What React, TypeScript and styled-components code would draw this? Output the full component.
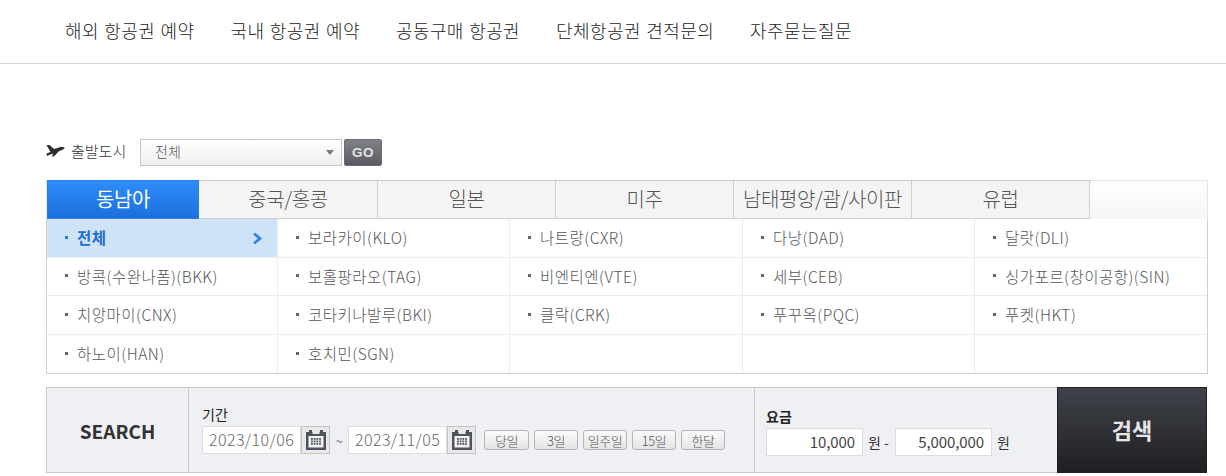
import styled, { createGlobalStyle } from 'styled-components';

const GlobalStyle = createGlobalStyle`
  html, body {
    margin: 0;
    padding: 0;
    background: #fff;
  }
  body {
    font-family: "Noto Sans CJK KR", "Noto Sans", sans-serif;
    color: #333;
    overflow: hidden;
  }
`;

const Nav = styled.nav`
  height: 63px;
  padding-left: 65px;
  display: flex;
  align-items: center;
  gap: 36px;
  border-bottom: 1px solid #d4d4d4;
`;

const NavItem = styled.a`
  font-size: 18px;
  letter-spacing: 0.4px;
  word-spacing: 1px;
  font-weight: 300;
  color: #222;
  line-height: 56px;
  height: 59px;
`;

const Page = styled.main`
  width: 1162px;
  margin-left: 46px;
  padding-top: 75px;
`;

const CityRow = styled.div`
  height: 27px;
  display: flex;
  align-items: center;
`;

const CityLabel = styled.span`
  width: 94px;
  display: flex;
  align-items: center;
  gap: 6px;
  font-size: 15px;
  font-weight: 300;
  color: #333;
  padding-bottom: 4px;
  box-sizing: border-box;
`;

const CitySelect = styled.div`
  border: 1px solid #c6c6c6;
  background: linear-gradient(#fff, #eeeeee);
  display: flex;
  align-items: center;
  justify-content: space-between;
  padding: 0 7px 3px 14px;
  box-sizing: content-box;
  width: 179px;
  height: 22px;
  font-size: 14px;
  font-weight: 300;
  color: #555;
`;

const Caret = styled.i`
  width: 0;
  height: 0;
  margin-top: 3px;
  border-left: 4.5px solid transparent;
  border-right: 4.5px solid transparent;
  border-top: 5px solid #777;
`;

const GoButton = styled.button`
  width: 38px;
  height: 27px;
  margin-left: 2px;
  padding: 0;
  border: 1px solid #6b6c72;
  border-radius: 2px;
  background: linear-gradient(#80828a, #595a61);
  color: #e4e4e4;
  font: 700 13.5px "Liberation Sans", sans-serif;
  letter-spacing: 0.5px;
`;

const TabBar = styled.div`
  margin-top: 14px;
  height: 39px;
  box-sizing: border-box;
  display: flex;
  border: 1px solid #e4e4e4;
  border-bottom: 0;
  background: linear-gradient(#fff, #f5f5f5);
`;

const Tab = styled.div<{ $active?: boolean; $width: number }>`
  width: ${(p) => p.$width}px;
  box-sizing: border-box;
  height: 39px;
  margin-top: -1px;
  padding-bottom: 2px;
  display: flex;
  align-items: center;
  justify-content: center;
  font-size: 20px;
  font-weight: ${(p) => (p.$active ? 400 : 300)};
  letter-spacing: -0.4px;
  white-space: nowrap;
  color: ${(p) => (p.$active ? '#fff' : '#555')};
  background: ${(p) => (p.$active ? 'linear-gradient(#2f8cfb, #1c70dc)' : '#f4f4f4')};
  border: 1px solid #cfcfcf;
  border-left-width: ${(p) => (p.$active ? '1px' : '0')};
  border-color: ${(p) => (p.$active ? '#2a82ef' : '#cfcfcf')};
`;

const CityGrid = styled.div`
  display: grid;
  grid-template-columns: 231px 232px 233px 232px 1fr;
  grid-auto-rows: 38.5px;
  border: 1px solid #cfcfcf;
  border-top: 0;
  height: 154px;
`;

const CityCell = styled.div<{ $active?: boolean }>`
  position: relative;
  box-sizing: border-box;
  display: flex;
  align-items: center;
  padding-left: 18px;
  padding-bottom: 1px;
  gap: 9px;
  border-right: 1px solid #ececec;
  border-bottom: 1px solid #ececec;
  font-size: 15.5px;
  letter-spacing: 0.5px;
  font-weight: ${(p) => (p.$active ? 700 : 300)};
  color: ${(p) => (p.$active ? '#1f6fd0' : '#555')};
  background: ${(p) => (p.$active ? '#cfe3f8' : '#fff')};

  &:nth-child(5n) {
    border-right: 0;
  }
  &:nth-last-child(-n + 5) {
    border-bottom: 0;
  }
`;

const Bullet = styled.i<{ $active?: boolean }>`
  width: 3px;
  height: 3px;
  background: ${(p) => (p.$active ? '#2a7fe0' : '#666')};
`;

const Chevron = styled.svg`
  position: absolute;
  right: 15px;
  top: 14px;
`;

const SearchPanel = styled.form`
  margin-top: 13px;
  width: 1161px;
  height: 86px;
  box-sizing: border-box;
  display: flex;
  background: #eff0f4;
  border: 1px solid #c9c9c9;
  border-right: 0;
`;

const SearchTitle = styled.div`
  width: 141px;
  flex: none;
  display: flex;
  align-items: center;
  justify-content: center;
  border-right: 1px solid #c9c9c9;
  font-size: 19px;
  font-weight: 700;
  color: #333;
`;

const PeriodCell = styled.div`
  width: 566px;
  flex: none;
  box-sizing: border-box;
  padding: 16px 0 0 13px;
  border-right: 1px solid #c9c9c9;
`;

const FeeCell = styled.div`
  width: 302px;
  flex: none;
  box-sizing: border-box;
  padding: 18px 0 0 11px;
`;

const FieldLabel = styled.div<{ $bold?: boolean }>`
  height: 22px;
  font-size: 14px;
  line-height: 20px;
  font-weight: ${(p) => (p.$bold ? 700 : 400)};
  color: #222;
`;

const FieldRow = styled.div`
  display: flex;
  align-items: center;
`;

const DateBox = styled.div`
  width: 99px;
  height: 28px;
  box-sizing: border-box;
  background: #fff;
  border: 1px solid #dcdcdc;
  font-size: 16px;
  font-weight: 300;
  letter-spacing: 0.4px;
  line-height: 25px;
  padding-left: 6px;
  color: #666;
  white-space: nowrap;
`;

const CalButton = styled.div`
  width: 29px;
  height: 28px;
  box-sizing: border-box;
  display: flex;
  align-items: center;
  justify-content: center;
  border: 1px solid #c4c4c4;
  background: #e8e8e8;
`;

const Tilde = styled.span`
  width: 18px;
  text-align: center;
  font-size: 12px;
  color: #555;
`;

const Quick = styled.div`
  display: flex;
  gap: 5px;
  margin-left: 8px;
`;

const QuickButton = styled.span<{ $width: number }>`
  width: ${(p) => p.$width}px;
  height: 20px;
  box-sizing: border-box;
  display: flex;
  align-items: center;
  justify-content: center;
  border: 1px solid #b5b5b5;
  border-radius: 3px;
  background: linear-gradient(#fafafa, #e4e4e4);
  font-size: 13px;
  font-weight: 300;
  letter-spacing: -0.5px;
  color: #555;
`;

const PriceBox = styled.div<{ $width: number }>`
  width: ${(p) => p.$width}px;
  height: 28px;
  box-sizing: border-box;
  background: #fff;
  border: 1px solid #dcdcdc;
  font-size: 15px;
  letter-spacing: -0.1px;
  line-height: 26px;
  text-align: right;
  padding-right: 7px;
  color: #444;
`;

const Unit = styled.span<{ $width: number }>`
  width: ${(p) => p.$width}px;
  padding-left: 5px;
  box-sizing: border-box;
  font-size: 14px;
  color: #333;
  white-space: nowrap;
`;

const SubmitButton = styled.button`
  width: 150px;
  height: 86px;
  margin-top: -1px;
  flex: none;
  border: 1px solid #1f2023;
  padding: 0 0 2px;
  background: linear-gradient(#3f4249, #1f2023);
  color: #e6e6e6;
  font: 700 22px "Noto Sans CJK KR", sans-serif;
`;

const navItems = ['해외 항공권 예약', '국내 항공권 예약', '공동구매 항공권', '단체항공권 견적문의', '자주묻는질문'];

const tabs = [
  { label: '동남아', width: 152 },
  { label: '중국/홍콩', width: 179 },
  { label: '일본', width: 178 },
  { label: '미주', width: 178 },
  { label: '남태평양/괌/사이판', width: 178 },
  { label: '유럽', width: 178 },
];

const cities = [
  '전체', '보라카이(KLO)', '나트랑(CXR)', '다낭(DAD)', '달랏(DLI)',
  '방콕(수완나폼)(BKK)', '보홀팡라오(TAG)', '비엔티엔(VTE)', '세부(CEB)', '싱가포르(창이공항)(SIN)',
  '치앙마이(CNX)', '코타키나발루(BKI)', '클락(CRK)', '푸꾸옥(PQC)', '푸켓(HKT)',
  '하노이(HAN)', '호치민(SGN)', '', '', '',
];

const quickRanges = [
  { label: '당일', width: 45 },
  { label: '3일', width: 44 },
  { label: '일주일', width: 44 },
  { label: '15일', width: 44 },
  { label: '한달', width: 44 },
];

function PlaneIcon() {
  return (
    <svg width="19" height="14" viewBox="0 0 19 14">
      <path
        d="M0.500 1L3.500 1L8 5L13 3.500C15.500 2.800 18.500 3 18.500 4C18.500 5.200 15 6.500 12.500 7.500L9 11.500L6 13L7 9.500L3 11L1 12L0.500 9.500L4.500 8Z"
        fill="#2d2d2d"
      />
    </svg>
  );
}

function CalendarIcon() {
  return (
    <svg width="20" height="20" viewBox="0 0 20 20">
      <rect x="0" y="2" width="20" height="18" fill="#4f5360" />
      <rect x="3" y="0" width="3" height="4" fill="#4f5360" />
      <rect x="14" y="0" width="3" height="4" fill="#4f5360" />
      <rect x="6.500" y="2" width="7" height="2" fill="#e8e8e8" />
      <rect x="2.500" y="6" width="15" height="11.500" fill="#f4f4f4" />
      {[8, 10.500, 13].map((y) =>
        [5, 7.700, 10.400, 13.100].map((x) => <rect key={`${x}-${y}`} x={x} y={y} width="1.800" height="1.800" fill="#4f5360" />),
      )}
    </svg>
  );
}

export default function App() {
  return (
    <>
      <GlobalStyle />
      <Nav>
        {navItems.map((item) => (
          <NavItem key={item}>{item}</NavItem>
        ))}
      </Nav>
      <Page>
        <CityRow>
          <CityLabel>
            <PlaneIcon />
            출발도시
          </CityLabel>
          <CitySelect>
            전체
            <Caret />
          </CitySelect>
          <GoButton type="button">GO</GoButton>
        </CityRow>
        <TabBar>
          {tabs.map((tab, idx) => (
            <Tab key={tab.label} $active={idx === 0} $width={tab.width}>
              {tab.label}
            </Tab>
          ))}
        </TabBar>
        <CityGrid>
          {cities.map((city, idx) => (
            <CityCell key={idx} $active={idx === 0}>
              {city && <Bullet $active={idx === 0} />}
              {city}
              {idx === 0 && (
                <Chevron width="9" height="11" viewBox="0 0 9 11">
                  <path d="M1 .5L7 5.500 1 10.500" fill="none" stroke="#2a7fe0" strokeWidth="2.600" />
                </Chevron>
              )}
            </CityCell>
          ))}
        </CityGrid>
        <SearchPanel>
          <SearchTitle>SEARCH</SearchTitle>
          <PeriodCell>
            <FieldLabel>기간</FieldLabel>
            <FieldRow>
              <DateBox>2023/10/06</DateBox>
              <CalButton>
                <CalendarIcon />
              </CalButton>
              <Tilde>~</Tilde>
              <DateBox>2023/11/05</DateBox>
              <CalButton>
                <CalendarIcon />
              </CalButton>
              <Quick>
                {quickRanges.map((q) => (
                  <QuickButton key={q.label} $width={q.width}>
                    {q.label}
                  </QuickButton>
                ))}
              </Quick>
            </FieldRow>
          </PeriodCell>
          <FeeCell>
            <FieldLabel $bold>요금</FieldLabel>
            <FieldRow>
              <PriceBox $width={97}>10,000</PriceBox>
              <Unit $width={32}>원 -</Unit>
              <PriceBox $width={97}>5,000,000</PriceBox>
              <Unit $width={24}>원</Unit>
            </FieldRow>
          </FeeCell>
          <SubmitButton type="button">검색</SubmitButton>
        </SearchPanel>
      </Page>
    </>
  );
}
